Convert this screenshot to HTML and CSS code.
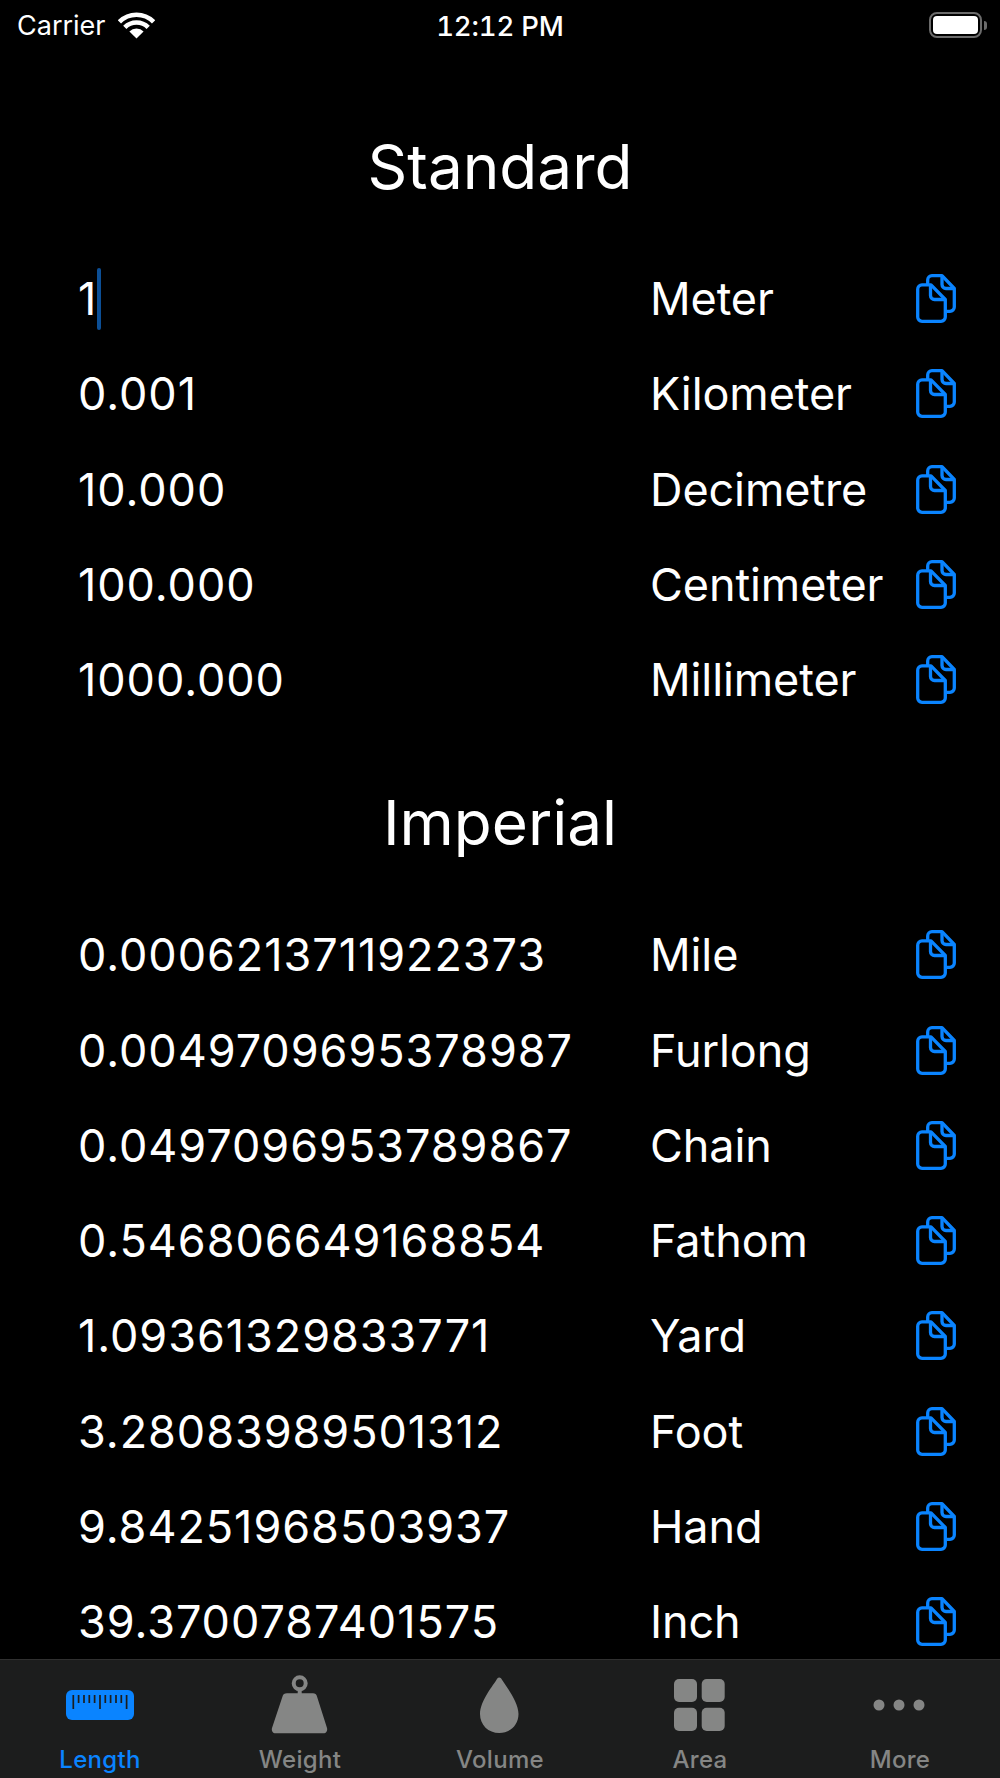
FILE: index.html
```html
<!DOCTYPE html>
<html lang="en">
<head>
<meta charset="utf-8">
<title>Length converter</title>
<link rel="stylesheet" href="styles.css">
</head>
<body>
<svg class="defs" width="0" height="0" aria-hidden="true">
  <symbol id="copy" viewBox="0 0 40 49">
    <path d="M11.700 11 V6 A4.300 4.300 0 0 1 16 1.700 H26 L38.300 14.500 V33 A4.300 4.300 0 0 1 34 37.300 H29" fill="none" stroke="currentColor" stroke-width="3.300" stroke-linejoin="round"/>
    <path d="M26 1.700 V10.500 A4 4 0 0 0 30 14.500 H38.300" fill="none" stroke="currentColor" stroke-width="3.300" stroke-linejoin="round"/>
    <path d="M6 10.900 H15 L29.300 25.500 V43 A4.300 4.300 0 0 1 25 47.300 H6 A4.300 4.300 0 0 1 1.700 43 V15.200 A4.300 4.300 0 0 1 6 10.900 Z" fill="#000" stroke="currentColor" stroke-width="3.300" stroke-linejoin="round"/>
    <path d="M14.500 10.900 V21.500 A4 4 0 0 0 18.500 25.500 H29.300" fill="none" stroke="currentColor" stroke-width="3.300" stroke-linejoin="round"/>
  </symbol>
</svg>
<div class="phone">
  <header class="status">
    <div class="status-left">
      <span>Carrier</span>
      <svg class="wifi" viewBox="0 0 37 27">
        <path d="M1.400 9.900 A24 24 0 0 1 35.600 9.900" fill="none" stroke="#fff" stroke-width="4.600"/>
        <path d="M6.800 15.400 A16.500 16.500 0 0 1 30.200 15.400" fill="none" stroke="#fff" stroke-width="4.600"/>
        <path d="M18.500 26.500 L11.400 19.400 A10 10 0 0 1 25.600 19.400 Z" fill="#fff"/>
      </svg>
    </div>
    <div class="status-time">12:12 PM</div>
    <div class="status-right">
      <div class="battery"><div class="battery-fill"></div></div>
      <div class="battery-cap"></div>
    </div>
  </header>

  <main class="content">
    <section class="group">
      <h2 class="group-title">Standard</h2>
      <div class="row"><div class="value"><span>1</span><i class="caret"></i></div><div class="unit">Meter</div><svg class="copy"><use href="#copy"/></svg></div>
      <div class="row"><div class="value">0.001</div><div class="unit">Kilometer</div><svg class="copy"><use href="#copy"/></svg></div>
      <div class="row"><div class="value">10.000</div><div class="unit">Decimetre</div><svg class="copy"><use href="#copy"/></svg></div>
      <div class="row"><div class="value">100.000</div><div class="unit">Centimeter</div><svg class="copy"><use href="#copy"/></svg></div>
      <div class="row"><div class="value">1000.000</div><div class="unit">Millimeter</div><svg class="copy"><use href="#copy"/></svg></div>
    </section>
    <section class="group">
      <h2 class="group-title">Imperial</h2>
      <div class="row"><div class="value">0.0006213711922373</div><div class="unit">Mile</div><svg class="copy"><use href="#copy"/></svg></div>
      <div class="row"><div class="value">0.0049709695378987</div><div class="unit">Furlong</div><svg class="copy"><use href="#copy"/></svg></div>
      <div class="row"><div class="value">0.0497096953789867</div><div class="unit">Chain</div><svg class="copy"><use href="#copy"/></svg></div>
      <div class="row"><div class="value">0.546806649168854</div><div class="unit">Fathom</div><svg class="copy"><use href="#copy"/></svg></div>
      <div class="row"><div class="value">1.09361329833771</div><div class="unit">Yard</div><svg class="copy"><use href="#copy"/></svg></div>
      <div class="row"><div class="value">3.28083989501312</div><div class="unit">Foot</div><svg class="copy"><use href="#copy"/></svg></div>
      <div class="row"><div class="value">9.84251968503937</div><div class="unit">Hand</div><svg class="copy"><use href="#copy"/></svg></div>
      <div class="row"><div class="value">39.3700787401575</div><div class="unit">Inch</div><svg class="copy"><use href="#copy"/></svg></div>
    </section>
  </main>

  <nav class="tabbar">
    <div class="tab active">
      <svg class="tab-icon" viewBox="0 0 80 70">
        <rect x="6" y="16" width="68" height="30" rx="6" fill="currentColor"/>
        <path d="M13.300 21 V35 M18.600 21 V29 M24 21 V29 M29.300 21 V29 M34.600 21 V29 M40 21 V35 M45.300 21 V29 M50.600 21 V29 M56 21 V29 M61.300 21 V29 M66.600 21 V35" stroke="#1c1e1e" stroke-width="1.700" fill="none"/>
      </svg>
      <span>Length</span>
    </div>
    <div class="tab">
      <svg class="tab-icon" viewBox="0 0 80 70">
        <circle cx="39.700" cy="9.300" r="6" fill="none" stroke="currentColor" stroke-width="4"/>
        <rect x="37.700" y="14" width="4" height="6" fill="currentColor"/>
        <path d="M27 19.300 H53 C55 19.300 56.500 20.500 57 22.500 L67 54 C67.800 57 66 59.300 63.500 59.300 H15.500 C13 59.300 11.200 57 12 54 L22.500 22.500 C23 20.500 24.500 19.300 27 19.300Z" fill="currentColor"/>
      </svg>
      <span>Weight</span>
    </div>
    <div class="tab">
      <svg class="tab-icon" viewBox="0 0 80 70">
        <path d="M37.500 4.300 C38.300 3.100 40 3.100 41 4.300 C45 11 58.500 27 58.500 40 C58.500 51 50.300 59 39.300 59 C28.300 59 20 51 20 40 C20 27 33.500 11 37.500 4.300Z" fill="currentColor"/>
      </svg>
      <span>Volume</span>
    </div>
    <div class="tab">
      <svg class="tab-icon" viewBox="0 0 80 70">
        <rect x="14" y="5" width="23" height="23" rx="5" fill="currentColor"/>
        <rect x="41.700" y="5" width="23" height="23" rx="5" fill="currentColor"/>
        <rect x="14" y="33.700" width="23" height="23.300" rx="5" fill="currentColor"/>
        <rect x="41.700" y="33.700" width="23" height="23.300" rx="5" fill="currentColor"/>
      </svg>
      <span>Area</span>
    </div>
    <div class="tab">
      <svg class="tab-icon" viewBox="0 0 80 70">
        <circle cx="19" cy="31" r="5.500" fill="currentColor"/>
        <circle cx="39" cy="31" r="5.500" fill="currentColor"/>
        <circle cx="59" cy="31" r="5.500" fill="currentColor"/>
      </svg>
      <span>More</span>
    </div>
  </nav>
</div>
</body>
</html>
```

FILE: styles.css
```css
* { box-sizing: border-box; }
html, body { margin: 0; padding: 0; background: #000; }
.defs { position: absolute; }
.phone {
  width: 1000px;
  height: 1778px;
  display: flex;
  flex-direction: column;
  background: #000;
  color: #fff;
  font-family: Inter, "Liberation Sans", sans-serif;
  overflow: hidden;
}
.status {
  flex: none;
  height: 50px;
  padding: 0 13px;
  display: grid;
  grid-template-columns: 1fr auto 1fr;
  align-items: center;
  font-size: 27px;
}
.status-left { display: flex; align-items: center; gap: 12px; padding-left: 4px; }
.wifi { width: 37px; height: 27px; }
.status-time {
  font-weight: 500;
  font-size: 27.5px;
  letter-spacing: -0.15px;
  font-variant-numeric: tabular-nums;
  padding-top: 2px;
}
.status-right { display: flex; align-items: center; justify-content: flex-end; }
.battery {
  width: 53px;
  height: 26px;
  border: 2px solid #6b6b6b;
  border-radius: 8px;
  padding: 2px;
}
.battery-fill { width: 100%; height: 100%; background: #fff; border-radius: 4px; }
.battery-cap { width: 3px; height: 9px; margin-left: 2px; background: #6b6b6b; border-radius: 0 3px 3px 0; }
.content {
  flex: 1;
  min-height: 0;
  overflow: hidden;
  padding: 79px 44px 0 78px;
}
.group { margin-bottom: 58px; }
.group-title {
  margin: 0 -44px 0 -78px;
  height: 76px;
  line-height: 76px;
  text-align: center;
  font-weight: 400;
  font-size: 62px;
}
.row {
  height: 95.25px;
  display: flex;
  align-items: center;
  font-size: 45px;
}
.group-title + .row { margin-top: 46px; }
.value {
  flex: 0 0 572px;
  display: flex;
  align-items: center;
  letter-spacing: 0.95px;
}
.unit { flex: 1; letter-spacing: -0.1px; }
.copy { flex: none; width: 40px; height: 49px; color: #0a84ff; }
.caret {
  display: block;
  width: 4px;
  height: 62px;
  background: #0c4f96;
  border-radius: 2px;
}
.tabbar {
  flex: none;
  height: 119px;
  display: grid;
  grid-template-columns: repeat(5, 1fr);
  background: #1c1d1d;
  border-top: 1px solid #303030;
}
.tab {
  display: flex;
  flex-direction: column;
  align-items: center;
  color: #858685;
  font-size: 24px;
  font-weight: 500;
  letter-spacing: 0.3px;
}
.tab.active { color: #0a84ff; }
.tab-icon { width: 80px; height: 70px; margin-top: 14px; display: block; }
.tab span { line-height: 28px; margin-top: 2px; }
```
